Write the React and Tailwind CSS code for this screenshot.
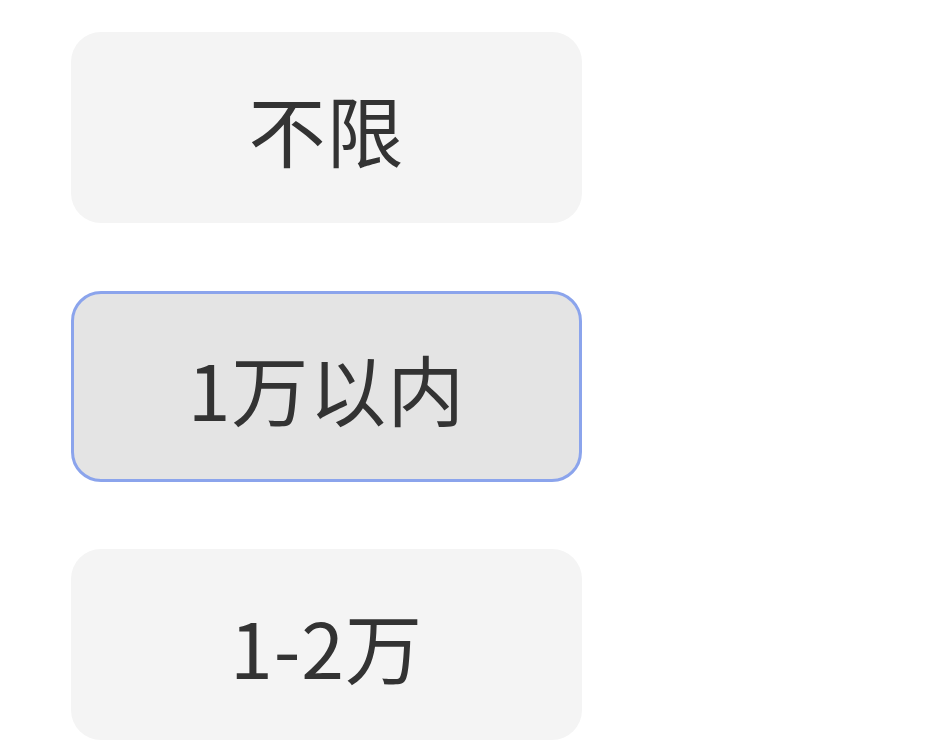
import React from "react";

const items = [
  { label: "不限", active: false },
  { label: "1万以内", active: true },
  { label: "1-2万", active: false },
];

export default function App() {
  return (
    <div
      className="w-[938px] h-[740px] overflow-hidden bg-white"
      style={{ fontFamily: '"Noto Sans CJK SC", "Noto Sans", sans-serif' }}
    >
      <div className="flex flex-col gap-[67.5px] pt-[32px] pl-[71px]">
        {items.map((it) => (
          <div
            key={it.label}
            className={
              it.active
                ? "w-[511px] h-[191px] shrink-0 rounded-[30px] flex items-center justify-center bg-[#e4e4e4] border-[3px] border-[#8ba4ec] text-[#333333] text-[77px] leading-none"
                : "w-[511px] h-[191px] shrink-0 rounded-[30px] flex items-center justify-center bg-[#f4f4f4] text-[#333333] text-[77px] leading-none"
            }
          >
            <span className="pt-[2px] tracking-[1px]">{it.label}</span>
          </div>
        ))}
      </div>
    </div>
  );
}
